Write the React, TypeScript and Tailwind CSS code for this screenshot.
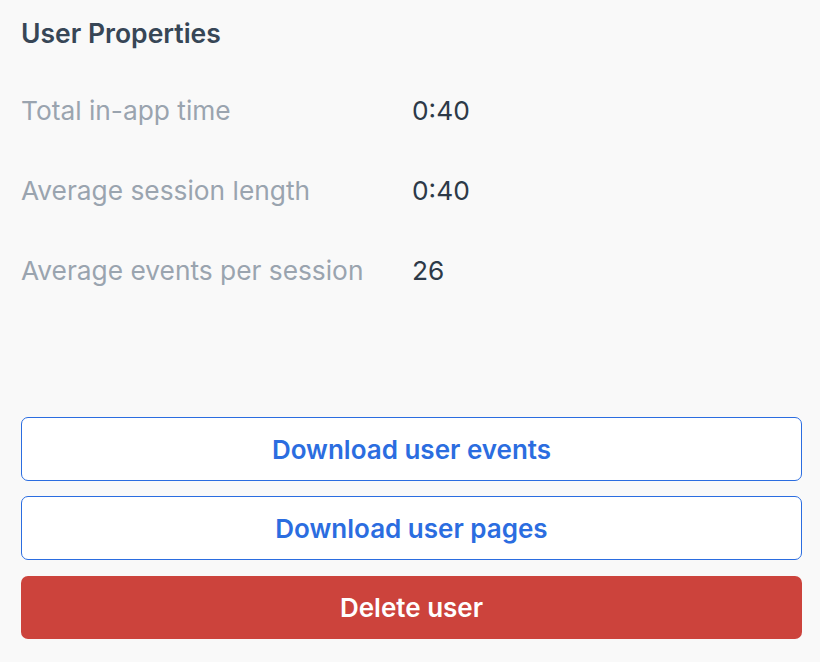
const stats = [
  { label: "Total in-app time", value: "0:40" },
  { label: "Average session length", value: "0:40" },
  { label: "Average events per session", value: "26" },
];

export default function App() {
  return (
    <div className="min-h-[662px] bg-[#f9f9f9] pl-[21px] pr-[18px] pt-[16px] font-['Inter',sans-serif]">
      <h2 className="text-[26.5px] leading-[34px] font-semibold text-[#374656]">User Properties</h2>

      <div className="mt-[21px]">
        {stats.map((s) => (
          <div key={s.label} className="grid h-[80px] grid-cols-[391px_1fr] items-center text-[26.3px]">
            <span className="text-[#9aa4af]">{s.label}</span>
            <span className="text-[#2d3a48]">{s.value}</span>
          </div>
        ))}
      </div>

      <div className="mt-[106px] flex flex-col gap-[15px]">
        <button
          type="button"
          className="h-[64px] w-full rounded-[7px] border border-[#2b6de0] bg-white text-[26px] font-semibold text-[#2b6de0]"
        >
          Download user events
        </button>
        <button
          type="button"
          className="h-[64px] w-full rounded-[7px] border border-[#2b6de0] bg-white text-[26px] font-semibold text-[#2b6de0]"
        >
          Download user pages
        </button>
        <button
          type="button"
          className="mt-px h-[63px] w-full rounded-[7px] bg-[#cc433c] text-[26px] font-semibold text-white"
        >
          Delete user
        </button>
      </div>
    </div>
  );
}
